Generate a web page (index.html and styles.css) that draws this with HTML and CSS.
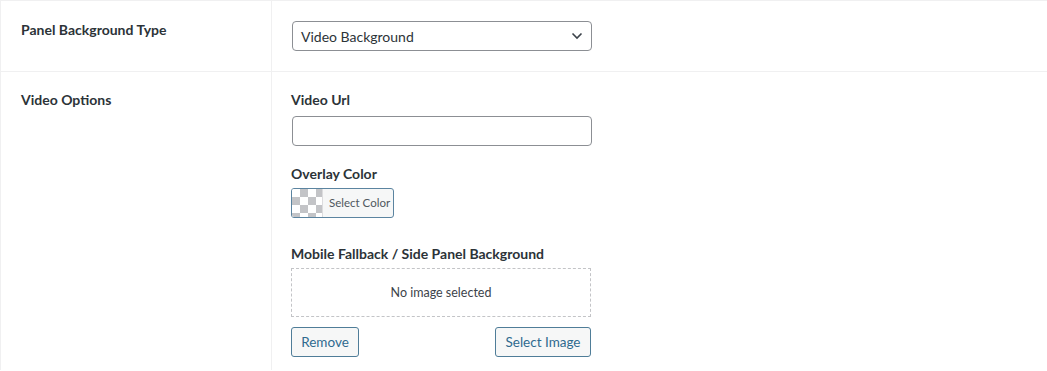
FILE: index.html
```html
<!DOCTYPE html>
<html lang="en">
<head>
  <meta charset="UTF-8">
  <title>Panel Options</title>
  <link rel="stylesheet" href="styles.css">
</head>
<body>
  <div class="form-table">
    <div class="row first">
      <div class="row-label">Panel Background Type</div>
      <div class="row-field">
        <div class="select-box">
          <span>Video Background</span>
          <svg class="chevron" width="12" height="8" viewBox="0 0 12 8"><path d="M1.5 1.5 L6 6 L10.5 1.5" fill="none" stroke="#3c434a" stroke-width="1.6"/></svg>
        </div>
      </div>
    </div>

    <div class="row second">
      <div class="row-label">Video Options</div>
      <div class="row-field">
        <div class="field-title">Video Url</div>
        <div class="text-input"></div>

        <div class="field-title spaced">Overlay Color</div>
        <div class="color-btn">
          <span class="swatch"></span>
          <span class="color-text">Select Color</span>
        </div>

        <div class="field-title spaced-more">Mobile Fallback / Side Panel Background</div>
        <div class="image-drop">No image selected</div>
        <div class="image-actions">
          <button class="wp-btn remove">Remove</button>
          <button class="wp-btn select">Select Image</button>
        </div>
      </div>
    </div>
  </div>
</body>
</html>
```

FILE: styles.css
```css
body {
  margin: 0;
  background-color: #fff;
  font-family: Lato, "Noto Sans", sans-serif;
  color: #1d2327;
  overflow: hidden;
}

.form-table {
  border-top: 1px solid #f0f0f1;
  border-left: 1px solid #f0f0f1;
}

.row {
  display: grid;
  grid-template-columns: 271px 1fr;
}

.row.first {
  border-bottom: 1px solid #f0f0f1;
}

.row-label {
  border-right: 1px solid #f0f0f1;
  padding-left: 20px;
  font-size: 14px;
  font-weight: 700;
  line-height: 20px;
  color: #2c3338;
}

.row.first .row-label {
  padding-top: 19px;
}

.row.second .row-label {
  padding-top: 18px;
}

.row-field {
  padding-left: 20px;
}

.row.first .row-field {
  padding-top: 20px;
  padding-bottom: 20px;
}

.row.second .row-field {
  padding-top: 18px;
  padding-bottom: 13px;
}

/* Select */
.select-box {
  width: 300px;
  height: 30px;
  box-sizing: border-box;
  border: 1px solid #8c8f94;
  border-radius: 4px;
  display: flex;
  align-items: center;
  justify-content: space-between;
  padding: 0 8px;
  font-size: 14px;
  color: #2c3338;
}

.field-title {
  font-size: 14px;
  font-weight: 700;
  line-height: 20px;
  color: #2c3338;
  margin-left: -1px;
  margin-bottom: 4px;
}

.field-title:first-child {
  margin-bottom: 6px;
}

.field-title.spaced {
  margin-top: 18px;
}

.field-title.spaced-more {
  margin-top: 26px;
}

.text-input {
  width: 300px;
  height: 30px;
  box-sizing: border-box;
  border: 1px solid #8c8f94;
  border-radius: 4px;
}

/* Color picker button */
.color-btn {
  width: 103px;
  height: 30px;
  box-sizing: border-box;
  margin-left: -1px;
  border: 1px solid #5b84a0;
  border-radius: 3px;
  background-color: #f6f7f7;
  display: flex;
  overflow: hidden;
}

.swatch {
  width: 30px;
  height: 100%;
  border-right: 1px solid #dcdcde;
  background-color: #fff;
  background-image:
    linear-gradient(45deg, #c3c4c7 25%, transparent 25%, transparent 75%, #c3c4c7 75%),
    linear-gradient(45deg, #c3c4c7 25%, transparent 25%, transparent 75%, #c3c4c7 75%);
  background-size: 16px 16px;
  background-position: 0 0, 8px 8px;
}

.color-text {
  font-size: 11.5px;
  color: #50575e;
  line-height: 28px;
  padding-left: 6px;
}

/* Image picker */
.image-drop {
  width: 300px;
  height: 49px;
  box-sizing: border-box;
  margin-left: -1px;
  border: 1px dashed #c3c4c7;
  display: flex;
  align-items: center;
  justify-content: center;
  font-size: 12.5px;
  color: #3c434a;
}

.image-actions {
  width: 300px;
  margin-left: -1px;
  display: flex;
  justify-content: space-between;
  margin-top: 10px;
}

.wp-btn {
  height: 30px;
  border: 1px solid #4f7d98;
  border-radius: 3px;
  background-color: #f6f7f7;
  color: #2f6a8f;
  font-family: Lato, "Noto Sans", sans-serif;
  font-size: 13.5px;
  padding: 0;
}

.wp-btn.remove {
  width: 68px;
}

.wp-btn.select {
  width: 96px;
}
```
